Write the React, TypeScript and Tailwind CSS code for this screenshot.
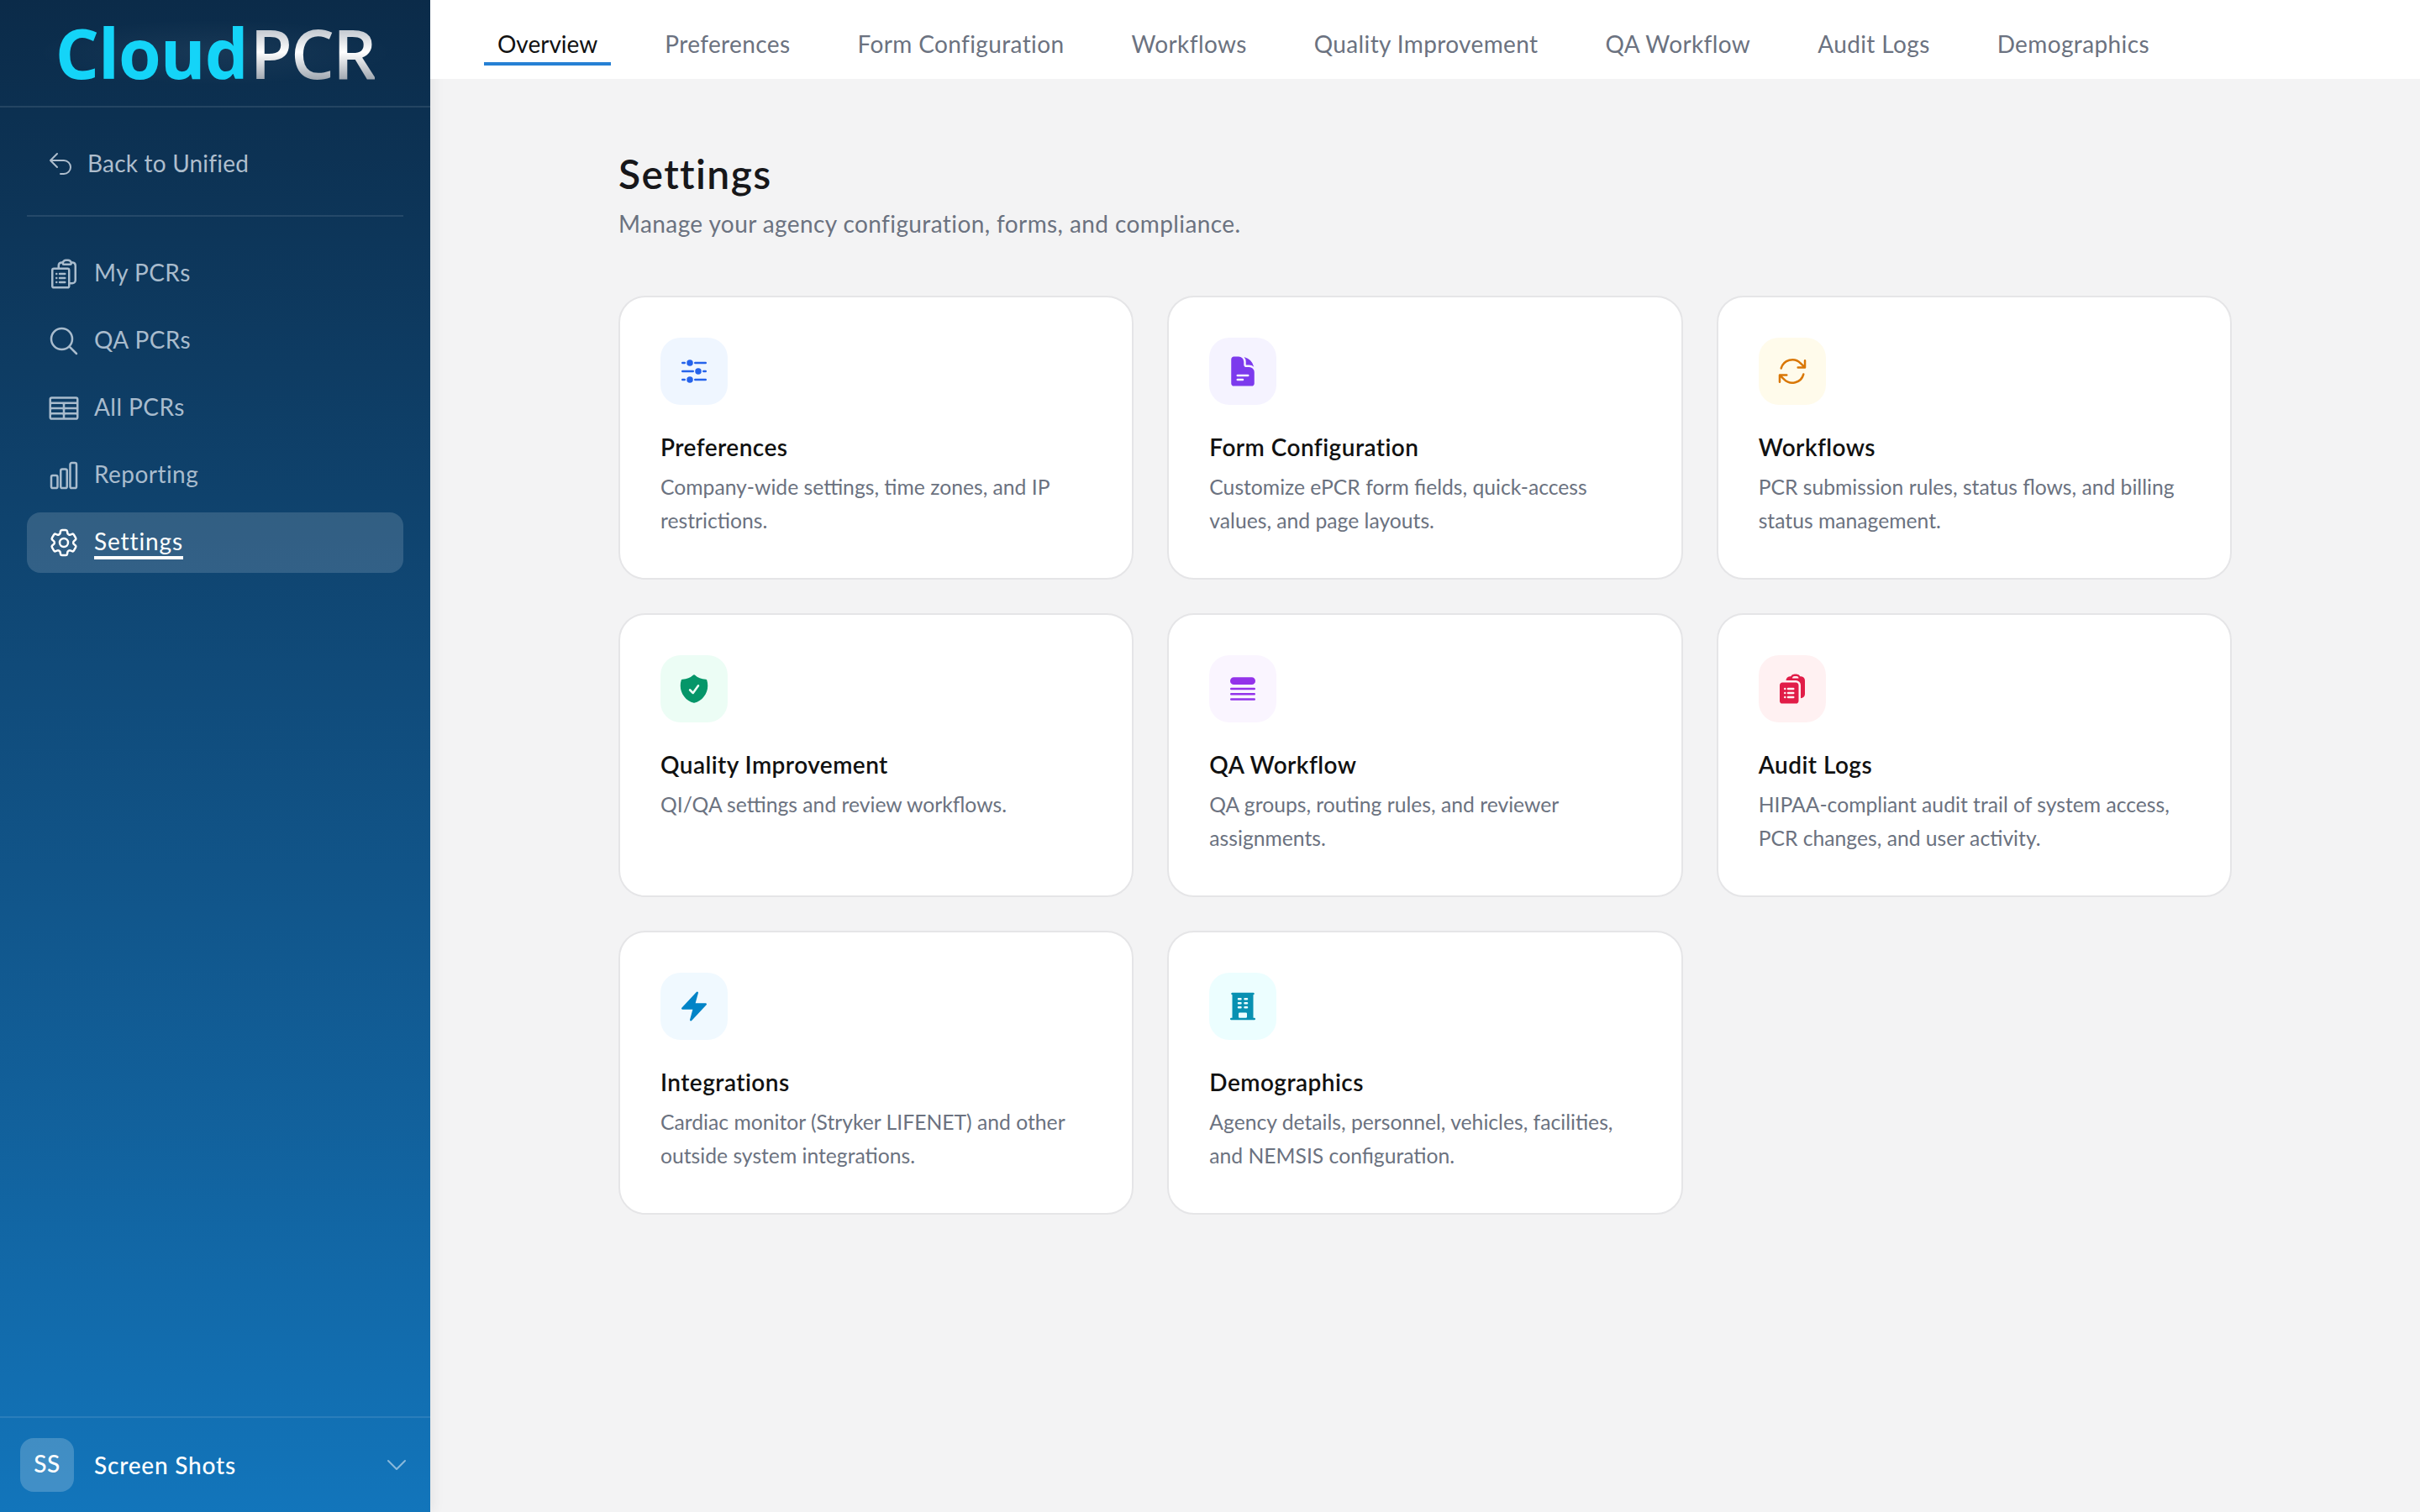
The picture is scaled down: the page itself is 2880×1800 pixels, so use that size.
import {
  HiOutlineArrowUturnLeft,
  HiOutlineClipboardDocumentList,
  HiOutlineMagnifyingGlass,
  HiOutlineTableCells,
  HiOutlineChartBar,
  HiOutlineCog6Tooth,
  HiOutlineChevronDown,
  HiAdjustmentsHorizontal,
  HiDocumentText,
  HiArrowPath,
  HiShieldCheck,
  HiQueueList,
  HiClipboardDocumentList,
  HiBolt,
  HiBuildingOffice,
} from 'react-icons/hi2'

const tabs = ['Overview', 'Preferences', 'Form Configuration', 'Workflows', 'Quality Improvement', 'QA Workflow', 'Audit Logs', 'Demographics']

const navItems = [
  { label: 'My PCRs', icon: HiOutlineClipboardDocumentList },
  { label: 'QA PCRs', icon: HiOutlineMagnifyingGlass },
  { label: 'All PCRs', icon: HiOutlineTableCells },
  { label: 'Reporting', icon: HiOutlineChartBar },
  { label: 'Settings', icon: HiOutlineCog6Tooth, active: true },
]

const cards = [
  { title: 'Preferences', desc: 'Company-wide settings, time zones, and IP restrictions.', icon: HiAdjustmentsHorizontal, tone: 'bg-[#eff6ff] text-[#2563eb]' },
  { title: 'Form Configuration', desc: 'Customize ePCR form fields, quick-access values, and page layouts.', icon: HiDocumentText, tone: 'bg-[#f5f3ff] text-[#7c3aed]' },
  { title: 'Workflows', desc: 'PCR submission rules, status flows, and billing status management.', icon: HiArrowPath, tone: 'bg-[#fffbeb] text-[#d97706]' },
  { title: 'Quality Improvement', desc: 'QI/QA settings and review workflows.', icon: HiShieldCheck, tone: 'bg-[#ecfdf5] text-[#059669]' },
  { title: 'QA Workflow', desc: 'QA groups, routing rules, and reviewer assignments.', icon: HiQueueList, tone: 'bg-[#faf5ff] text-[#9333ea]' },
  { title: 'Audit Logs', desc: 'HIPAA-compliant audit trail of system access, PCR changes, and user activity.', icon: HiClipboardDocumentList, tone: 'bg-[#fff1f2] text-[#e11d48]' },
  { title: 'Integrations', desc: 'Cardiac monitor (Stryker LIFENET) and other outside system integrations.', icon: HiBolt, tone: 'bg-[#f0f9ff] text-[#0284c7]' },
  { title: 'Demographics', desc: 'Agency details, personnel, vehicles, facilities, and NEMSIS configuration.', icon: HiBuildingOffice, tone: 'bg-[#ecfeff] text-[#0891b2]' },
]

function Sidebar() {
  return (
    <aside className="relative z-10 flex h-full w-[512px] shrink-0 flex-col bg-gradient-to-b from-[#0b2b49] to-[#1275bb] shadow-[4px_0_14px_rgba(0,0,0,0.06)]">
      <div className="flex h-[128px] items-center justify-center border-b-2 border-white/10 pb-[2px]">
        <div className="flex items-baseline bg-[radial-gradient(closest-side,rgba(255,255,255,0.05),rgba(255,255,255,0))] px-6 font-['Open_Sans',sans-serif] text-[82px] leading-[78px] tracking-[-2px]">
          <span className="font-bold tracking-[-1px] text-[#14d4f8]">Cloud</span>
          <span className="ml-[3px] bg-gradient-to-b from-[#a8b0ba] via-[#ffffff] to-[#8f98a3] bg-clip-text font-semibold text-transparent">PCR</span>
        </div>
      </div>

      <div className="mx-8 mt-8 mb-[26px] flex h-[70px] items-center gap-4 px-6 text-[#afbecd]">
        <HiOutlineArrowUturnLeft className="size-8" />
        <span className="mb-[2px] text-[28px] tracking-[0.2px]">Back to Unified</span>
      </div>
      <div className="mx-8 h-[2px] bg-white/10" />

      <nav className="flex flex-col gap-2 px-8 pt-8">
        {navItems.map(item => {
          const Icon = item.icon
          return (
            <a
              key={item.label}
              className={item.active
                ? 'flex h-[72px] items-center gap-4 rounded-[16px] bg-white/15 px-6 text-white'
                : 'flex h-[72px] items-center gap-4 rounded-[16px] px-6 text-[#a9bccd]'}
            >
              <Icon className="size-10 shrink-0" />
              <span className={item.active
                ? 'border-b-4 border-white text-[28px] leading-[36px] tracking-[0.9px]'
                : 'border-b-4 border-transparent text-[28px] leading-[36px]'}>{item.label}</span>
            </a>
          )
        })}
      </nav>

      <div className="mt-auto flex h-[114px] items-center border-t-2 border-white/10 pr-6 pl-6">
        <div className="flex size-16 items-center justify-center rounded-[16px] bg-white/20 pb-1 text-[28px] font-medium text-white">SS</div>
        <span className="ml-6 flex-1 text-[28px] font-medium tracking-[0.8px] text-white">Screen Shots</span>
        <HiOutlineChevronDown className="size-8 text-white/50" />
      </div>
    </aside>
  )
}

function SettingsCard({ card }: { card: typeof cards[number] }) {
  const Icon = card.icon
  return (
    <div className="rounded-[32px] border-2 border-[#e5e5e7] bg-white p-12">
      <div className={`flex size-20 items-center justify-center rounded-[24px] ${card.tone}`}>
        <Icon className="size-10" />
      </div>
      <h3 className="mt-[30px] text-[28px] leading-[40px] font-semibold text-[#111111]">{card.title}</h3>
      <p className="mt-2 text-[24.7px] leading-[40px] tracking-normal text-[#6b7280]">{card.desc}</p>
    </div>
  )
}

export default function App() {
  return (
    <div className="flex h-[1800px] w-[2880px] overflow-hidden bg-[#f3f3f4] font-['Lato',sans-serif] tracking-[0.45px]">
      <Sidebar />
      <div className="flex min-w-0 flex-1 flex-col">
        <header className="relative z-20 flex h-[94px] shrink-0 items-start gap-12 bg-white pt-8 pl-16">
          {tabs.map((tab, i) => (
            <button
              key={tab}
              className={i === 0
                ? 'border-b-4 border-[#2680d4] px-4 pb-[2px] text-[28px] leading-[40px] tracking-normal text-[#111111]'
                : 'border-b-4 border-transparent px-4 pb-[2px] text-[28px] leading-[40px] tracking-[0.38px] text-[#6b7280]'}
            >
              {tab}
            </button>
          ))}
        </header>
        <main className="mx-auto w-[1920px] pt-20">
          <h1 className="mt-px text-[48px] leading-[64px] font-semibold tracking-[1.4px] text-[#17171a]">Settings</h1>
          <p className="mt-[7px] text-[28px] leading-[40px] tracking-[0.4px] text-[#6b7280]">Manage your agency configuration, forms, and compliance.</p>
          <div className="mt-[66px] grid grid-cols-3 gap-10">
            {cards.map(card => <SettingsCard key={card.title} card={card} />)}
          </div>
        </main>
      </div>
    </div>
  )
}
